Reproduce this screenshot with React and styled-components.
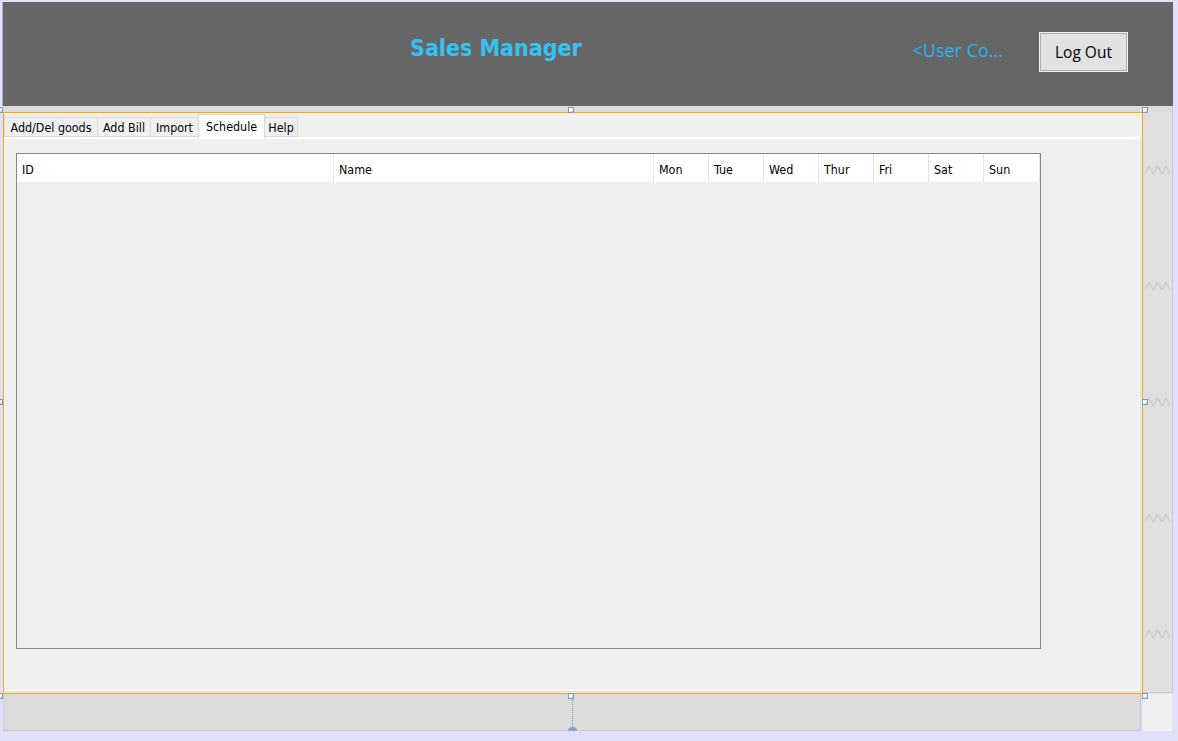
import React from 'react';
import styled, { createGlobalStyle } from 'styled-components';

const GlobalStyle = createGlobalStyle`
  html, body {
    margin: 0;
    padding: 0;
    background: #e0e0fb;
  }
  * { box-sizing: border-box; }
`;

const uiFont = `"DejaVu Sans Condensed", "DejaVu Sans", "Liberation Sans", sans-serif`;
const segoeFont = `"Open Sans", "Noto Sans", sans-serif`;

// whole designer canvas
const Root = styled.div`
  position: relative;
  width: 1178px;
  height: 741px;
  overflow: hidden;
  background: #e0e0fb;
  padding: 2px 0 0 3px;
  font-family: ${uiFont};
`;

const Frame = styled.div`
  display: grid;
  grid-template-columns: 1140px 30px;
  grid-template-rows: 104px 6px 582px 37px;
`;

// top dark bar
const Header = styled.header`
  grid-column: 1 / -1;
  display: flex;
  align-items: flex-start;
  background: #666666;
  box-shadow: -1px 0 0 #a3b1cc;
  padding: 0 45px 0 407px;
`;

const Title = styled.h1`
  margin: 35px 0 0;
  font-family: ${uiFont};
  font-size: 23px;
  line-height: 23px;
  font-weight: bold;
  color: #35c2f3;
  white-space: nowrap;
`;

const Spacer = styled.div`
  flex: 1;
`;

const UserLabel = styled.span`
  margin-top: 39px;
  font-family: ${segoeFont};
  font-size: 18px;
  line-height: 18px;
  color: #1fb6ef;
  white-space: nowrap;
`;

const LogOutButton = styled.button`
  width: 89px;
  height: 40px;
  margin: 30px 0 0 36px;
  padding: 0;
  border: 1px solid #f2f2f2;
  box-shadow: inset 0 0 0 1px #adadad;
  background: #e1e1e1;
  font-family: ${segoeFont};
  font-size: 15.5px;
  color: #000;
`;

const Strip = styled.div`
  grid-column: 1 / -1;
  background: #dcdcdc;
  border-right: 1px solid #c9c9c9;
`;

// central widget with the tab widget
const Main = styled.main`
  display: flex;
  flex-direction: column;
  background: #f0f0f0;
  border: 1px solid #ffa800;
`;

const TabBar = styled.div`
  display: flex;
  align-items: flex-end;
  height: 24px;
`;

const Tab = styled.div`
  position: relative;
  display: flex;
  align-items: center;
  justify-content: center;
  width: ${p => p.$w}px;
  height: ${p => (p.$active ? 25 : 20)}px;
  margin-right: -1px;
  margin-bottom: ${p => (p.$active ? -2 : 0)}px;
  z-index: ${p => (p.$active ? 2 : 1)};
  border: 1px solid #d9d9d9;
  border-bottom: ${p => (p.$active ? 'none' : '1px solid #d9d9d9')};
  background: ${p => (p.$active ? '#ffffff' : '#f0f0f0')};
  font-size: 12.4px;
  color: #000;
  padding-top: ${p => (p.$active ? 0 : 1)}px;
  padding-bottom: ${p => (p.$active ? 2 : 0)}px;
`;

const Pane = styled.section`
  flex: 1;
  margin: 0 2px 2px 0;
  padding: 14px 0 0 11px;
  border-top: 2px solid #ffffff;
  border-right: 1px solid #ffffff;
  border-bottom: 1px solid #ffffff;
  border-left: 1px solid #f7f7f7;
  box-shadow: 1px 1px 0 #dadada;
`;

const Table = styled.div`
  width: 1025px;
  height: 496px;
  border: 1px solid #828790;
  background: #f0f0f0;
`;

const HeaderRow = styled.div`
  display: grid;
  grid-template-columns: 317px 320px repeat(6, 55px) 56px;
  height: 28px;
  background: #ffffff;
`;

const HeaderCell = styled.div`
  display: flex;
  align-items: center;
  padding: 3px 0 0 5px;
  border-right: 1px solid #e3e3e3;
  font-size: 12.4px;
  color: #000;
`;

// right spacer column
const Side = styled.aside`
  display: flex;
  flex-direction: column;
  justify-content: space-around;
  align-items: center;
  background: #dfdfdf;
  border-right: 1px solid #c8c8c8;
  border-bottom: 1px solid #c8c8c8;
  margin-bottom: 1px;
`;

const BottomBar = styled.footer`
  margin-right: 2px;
  background: #dbdbdb;
  border-left: 1px solid #d2d2d2;
  border-right: 1px solid #c6c6c6;
  border-bottom: 1px solid #c6c6c6;
`;

const BottomCorner = styled.div`
  background: #f0f0f0;
  border-right: 1px solid #e4e4ee;
`;

// designer selection handles, drawn over the form
const Handle = styled.span`
  position: absolute;
  left: ${p => p.$x}px;
  top: ${p => p.$y}px;
  width: 6px;
  height: 6px;
  border: 1px solid #7e9bbd;
  background: linear-gradient(135deg, #ffffff 45%, #b8cbe2);
`;

const DottedLine = styled.span`
  position: absolute;
  left: 572px;
  top: 699px;
  height: 28px;
  border-left: 1px dotted #7e9bbd;
`;

const Knob = styled.span`
  position: absolute;
  left: 568px;
  top: 727px;
  width: 9px;
  height: 4px;
  border-radius: 5px 5px 0 0;
  background: #8ba6c4;
`;

const Zigzag = () => (
  <svg width="25" height="10" viewBox="0 0 25 10">
    <polyline
      points="0,9 4,1 8.5,9 12.5,1 17,9 21,1 25,9"
      fill="none"
      stroke="#c3c3c3"
      strokeWidth="1"
    />
  </svg>
);

const tabs = [
  { label: 'Add/Del goods', w: 94 },
  { label: 'Add Bill', w: 54 },
  { label: 'Import', w: 49 },
  { label: 'Schedule', w: 67, active: true },
  { label: 'Help', w: 34 },
];

const columns = ['ID', 'Name', 'Mon', 'Tue', 'Wed', 'Thur', 'Fri', 'Sat', 'Sun'];

const handles = [
  [568, 107], [1142, 107], [1142, 399], [568, 693], [1142, 693],
  [-3, 107], [-3, 399], [-3, 693],
];

export default function App() {
  return (
    <>
      <GlobalStyle />
      <Root>
        <Frame>
          <Header>
            <Title>Sales Manager</Title>
            <Spacer />
            <UserLabel>&lt;User Co...</UserLabel>
            <LogOutButton>Log Out</LogOutButton>
          </Header>
          <Strip />
          <Main>
            <TabBar>
              {tabs.map(t => (
                <Tab key={t.label} $w={t.w} $active={t.active}>{t.label}</Tab>
              ))}
            </TabBar>
            <Pane>
              <Table>
                <HeaderRow>
                  {columns.map(c => <HeaderCell key={c}>{c}</HeaderCell>)}
                </HeaderRow>
              </Table>
            </Pane>
          </Main>
          <Side>
            {[0, 1, 2, 3, 4].map(i => <Zigzag key={i} />)}
          </Side>
          <BottomBar />
          <BottomCorner />
        </Frame>
        {handles.map(([x, y]) => <Handle key={`${x}-${y}`} $x={x} $y={y} />)}
        <DottedLine />
        <Knob />
      </Root>
    </>
  );
}
